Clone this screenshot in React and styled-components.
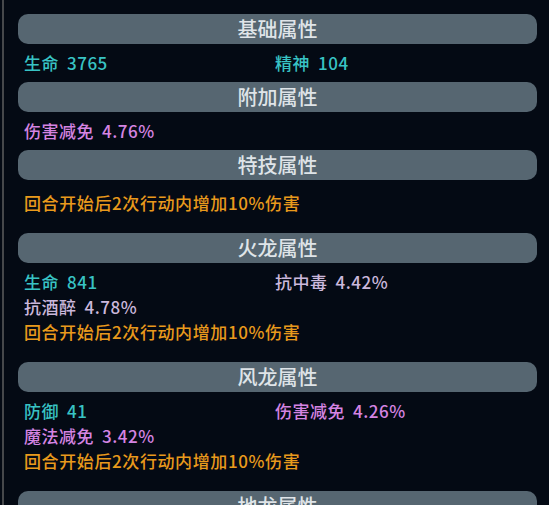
import styled, { createGlobalStyle } from "styled-components";

const GlobalStyle = createGlobalStyle`
  html, body {
    margin: 0;
    height: 505px;
    overflow: hidden;
    background: #040a14;
  }
  body {
    font-family: "Noto Sans CJK SC", "Noto Sans", sans-serif;
  }
`;

const colors = {
  cyan: "#38c3c4",
  pink: "#d584e2",
  lavender: "#cbb8dc",
  orange: "#e99a1c",
};

const Frame = styled.div`
  height: 505px;
  margin-left: 2px;
  border-left: 2px solid #46484b;
  padding: 14px 12px 0 14px;
  box-sizing: border-box;
`;

const Section = styled.section`
  margin-bottom: 7px;
`;

const Header = styled.div`
  height: 30px;
  border-radius: 10px;
  background: #566671;
  color: #dfe4e8;
  font-size: 20px;
  font-weight: 500;
  line-height: 30px;
  text-align: center;
`;

const Body = styled.div`
  padding: 6px 0 0 6px;
`;

const StatGrid = styled.div`
  display: grid;
  grid-template-columns: 251px 1fr;
`;

const Stat = styled.div`
  height: 25px;
  line-height: 25px;
  font-size: 17px;
  font-weight: 500;
  letter-spacing: 0.5px;
  color: ${(p) => colors[p.$tone]};
  white-space: nowrap;
`;

const Value = styled.span`
  margin-left: 8px;
`;

const Special = styled.div`
  height: 25px;
  line-height: 25px;
  font-size: 17px;
  font-weight: 500;
  letter-spacing: 0.6px;
  color: ${colors.orange};
  padding-bottom: 11px;
  white-space: nowrap;
  &:first-child {
    padding-top: 4px;
  }
`;

const special = "回合开始后2次行动内增加10%伤害";

const sections = [
  {
    title: "基础属性",
    stats: [
      { label: "生命", value: "3765", tone: "cyan" },
      { label: "精神", value: "104", tone: "cyan" },
    ],
  },
  {
    title: "附加属性",
    stats: [{ label: "伤害减免", value: "4.76%", tone: "pink" }],
  },
  { title: "特技属性", stats: [], special },
  {
    title: "火龙属性",
    stats: [
      { label: "生命", value: "841", tone: "cyan" },
      { label: "抗中毒", value: "4.42%", tone: "lavender" },
      { label: "抗酒醉", value: "4.78%", tone: "lavender" },
    ],
    special,
  },
  {
    title: "风龙属性",
    stats: [
      { label: "防御", value: "41", tone: "cyan" },
      { label: "伤害减免", value: "4.26%", tone: "pink" },
      { label: "魔法减免", value: "3.42%", tone: "pink" },
    ],
    special,
  },
  { title: "地龙属性", stats: [] },
];

export default function App() {
  return (
    <>
      <GlobalStyle />
      <Frame>
        {sections.map((s) => (
          <Section key={s.title}>
            <Header>{s.title}</Header>
            <Body>
              {s.stats.length > 0 && (
                <StatGrid>
                  {s.stats.map((st) => (
                    <Stat key={st.label} $tone={st.tone}>
                      {st.label}
                      <Value>{st.value}</Value>
                    </Stat>
                  ))}
                </StatGrid>
              )}
              {s.special && <Special>{s.special}</Special>}
            </Body>
          </Section>
        ))}
      </Frame>
    </>
  );
}
